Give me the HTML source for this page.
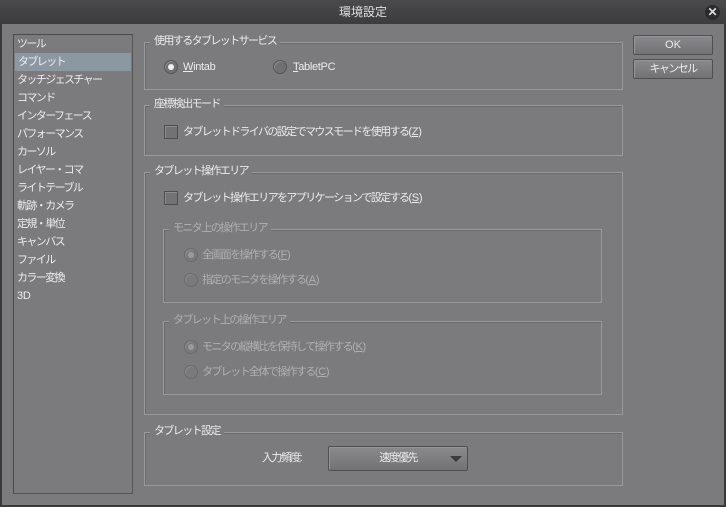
<!DOCTYPE html>
<html><head><meta charset="utf-8"><style>
*{margin:0;padding:0;box-sizing:border-box}
body{width:726px;height:507px;background:#3a3a3c;font-family:"Liberation Sans","Noto Sans CJK JP",sans-serif;font-size:11px;letter-spacing:-1.6px;color:#ececec;position:relative;overflow:hidden}
.l{letter-spacing:-0.3px}
.win{position:absolute;left:2px;top:24px;width:722px;height:481px;background:#7b7b7e}
.title{position:absolute;left:0;top:0;width:726px;height:24px;background:linear-gradient(#4a4a4c,#3c3c3e);text-align:center;line-height:24px;color:#e0e0e0;font-size:12px;letter-spacing:0}
.close{position:absolute;left:705px;top:5px;width:15px;height:15px;border-radius:50%;background:#2a2a2a;color:#ddd;font-size:12px;line-height:15px;text-align:center;font-weight:bold;letter-spacing:0}
.a{position:absolute}
.list{left:13px;top:34px;width:120px;height:460px;border:1px solid #4a4a4c;border-right-color:#555;border-bottom-color:#555}
.list div{height:18px;line-height:18px;padding-left:3px;white-space:nowrap}
.sel{background:#8b98a2;margin:0 1px}
.g{position:absolute;border:1px solid #9a9a9d;box-shadow:inset 1px 1px 0 #6a6a6d}
.gl{position:absolute;background:#7b7b7e;padding:0 4px;line-height:14px;white-space:nowrap}
.dis{color:#b0b0b2}
.radio{position:absolute;width:14px;height:14px;border-radius:50%;background:#707073;border:1px solid #555;box-shadow:inset 1px 1px 0 #8a8a8d}
.radio.on::after{content:"";position:absolute;left:3px;top:3px;width:6px;height:6px;border-radius:50%;background:#f0f0f0}
.radio.d{border-color:#6a6a6d;background:#7a7a7d}
.radio.d.on::after{background:#9a9a9c}
.cb{position:absolute;width:14px;height:14px;background:#727275;border:1px solid #4f4f52;box-shadow:inset 1px 1px 0 #8c8c8f}
.t{position:absolute;white-space:nowrap;line-height:14px}
.btn{position:absolute;border:1px solid #4f4f52;background:linear-gradient(#8a8a8d,#727275);text-align:center;box-shadow:inset 1px 1px 0 #959598;border-radius:2px}
</style></head><body>
<div class="title">環境設定</div>
<div class="close">✕</div>
<div class="win"></div>
<div class="a list">
<div>ツール</div><div class="sel">タブレット</div><div>タッチジェスチャー</div><div>コマンド</div><div>インターフェース</div><div>パフォーマンス</div><div>カーソル</div><div>レイヤー・コマ</div><div>ライトテーブル</div><div>軌跡・カメラ</div><div>定規・単位</div><div>キャンバス</div><div>ファイル</div><div>カラー変換</div><div class="l">3D</div>
</div>

<div class="g" style="left:144px;top:42px;width:479px;height:48px"></div>
<div class="gl" style="left:150px;top:34px">使用するタブレットサービス</div>
<div class="radio on" style="left:164px;top:60px"></div><div class="t l" style="left:183px;top:60px"><u>W</u>intab</div>
<div class="radio" style="left:273px;top:60px"></div><div class="t l" style="left:293px;top:60px"><u>T</u>abletPC</div>

<div class="g" style="left:144px;top:105px;width:479px;height:51px"></div>
<div class="gl" style="left:150px;top:97px">座標検出モード</div>
<div class="cb" style="left:164px;top:125px"></div><div class="t" style="left:183px;top:125px">タブレットドライバの設定でマウスモードを使用する<span class="l">(<u>Z</u>)</span></div>

<div class="g" style="left:144px;top:172px;width:479px;height:243px"></div>
<div class="gl" style="left:150px;top:164px">タブレット操作エリア</div>
<div class="cb" style="left:164px;top:191px"></div><div class="t" style="left:183px;top:191px">タブレット操作エリアをアプリケーションで設定する<span class="l">(<u>S</u>)</span></div>

<div class="g" style="left:163px;top:229px;width:439px;height:74px"></div>
<div class="gl dis" style="left:169px;top:221px">モニタ上の操作エリア</div>
<div class="radio d on" style="left:184px;top:248px"></div><div class="t dis" style="left:202px;top:248px">全画面を操作する<span class="l">(<u>F</u>)</span></div>
<div class="radio d" style="left:184px;top:273px"></div><div class="t dis" style="left:202px;top:273px">指定のモニタを操作する<span class="l">(<u>A</u>)</span></div>

<div class="g" style="left:163px;top:321px;width:439px;height:74px"></div>
<div class="gl dis" style="left:169px;top:313px">タブレット上の操作エリア</div>
<div class="radio d on" style="left:184px;top:340px"></div><div class="t dis" style="left:202px;top:340px">モニタの縦横比を保持して操作する<span class="l">(<u>K</u>)</span></div>
<div class="radio d" style="left:184px;top:365px"></div><div class="t dis" style="left:202px;top:365px">タブレット全体で操作する<span class="l">(<u>C</u>)</span></div>

<div class="g" style="left:144px;top:432px;width:479px;height:54px"></div>
<div class="gl" style="left:150px;top:424px">タブレット設定</div>
<div class="t" style="left:262px;top:451px">入力頻度<span class="l">:</span></div>
<div class="btn" style="left:328px;top:446px;width:140px;height:25px;line-height:23px">速度優先<span style="position:absolute;right:5px;top:9px;width:0;height:0;border-left:6px solid transparent;border-right:6px solid transparent;border-top:6px solid #3a3a3c"></span></div>

<div class="btn" style="left:633px;top:35px;width:80px;height:20px;line-height:18px;letter-spacing:0">OK</div>
<div class="btn" style="left:633px;top:59px;width:80px;height:20px;line-height:18px">キャンセル</div>
</body></html>
